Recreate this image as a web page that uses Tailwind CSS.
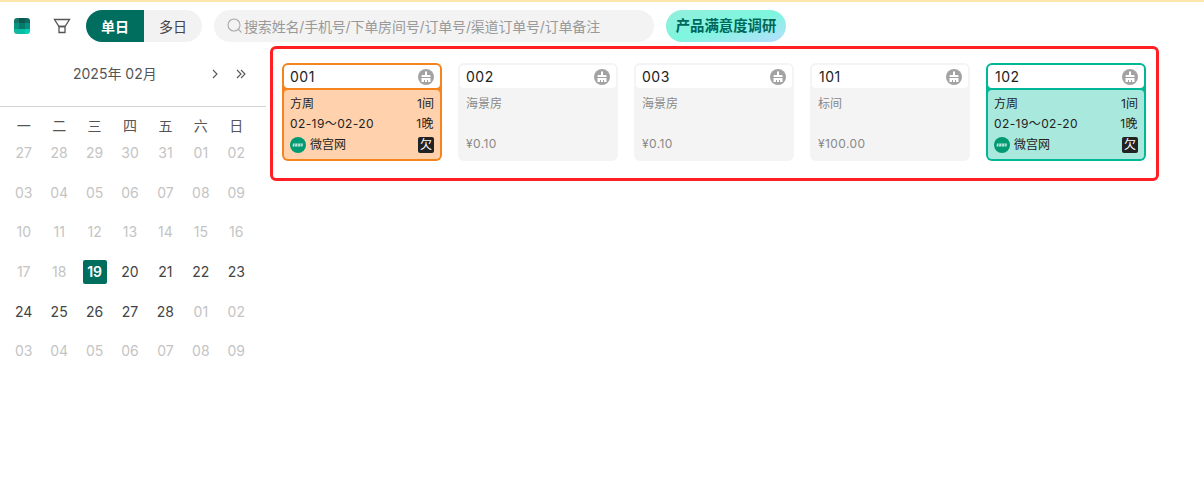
<!DOCTYPE html>
<html lang="zh">
<head>
    <meta charset="UTF-8">
    <title>房态</title>
    <script src="https://cdn.jsdelivr.net/npm/@tailwindcss/browser@4"></script>
</head>
<body class="bg-white w-[1204px] h-[504px] overflow-hidden font-['Inter','Noto_Sans_CJK_SC',sans-serif] text-[#333]">
    <div class="h-[2px] bg-[#fbe7ae]"></div>

    <!-- toolbar -->
    <div class="h-[44px] flex items-center pt-[4px]">
        <div class="ml-[14px] w-[16px] h-[16px] rounded-[3px] overflow-hidden grid grid-cols-3 grid-rows-3">
            <div class="bg-[#17756a]"></div><div class="bg-[#0a5a52]"></div><div class="bg-[#0d6a60]"></div>
            <div class="bg-[#0c9280]"></div><div class="bg-[#067a6b]"></div><div class="bg-[#07907f]"></div>
            <div class="bg-[#14b7a2]"></div><div class="bg-[#03bda5]"></div><div class="bg-[#03cfb6]"></div>
        </div>
        <svg class="ml-[23px]" width="18" height="18" viewBox="0 0 18 18" fill="none" stroke="#555" stroke-width="1.3">
            <path d="M1.5 2.5h15l-4.5 7h-6z"/>
            <path d="M6 9.5h6v6h-6z"/>
        </svg>
        <div class="ml-[15px] flex w-[116px] h-[32px] rounded-full overflow-hidden text-[14px]">
            <div class="w-[58px] bg-[#006e5f] text-white font-bold flex items-center justify-center">单日</div>
            <div class="w-[58px] bg-[#f2f2f2] text-[#444] flex items-center justify-center">多日</div>
        </div>
        <div class="ml-[12px] w-[440px] h-[32px] rounded-full bg-[#f3f3f3] flex items-center pl-[13px] text-[14px] tracking-[-0.18px] text-[#999]">
            <svg width="16" height="16" viewBox="0 0 16 16" fill="none" stroke="#aaa" stroke-width="1.1">
                <circle cx="7" cy="7" r="6"/>
                <path d="M11.5 11.5l3 3"/>
            </svg>
            <span class="ml-[1px]">搜索姓名/手机号/下单房间号/订单号/渠道订单号/订单备注</span>
        </div>
        <div class="ml-[12px] w-[120px] h-[32px] rounded-full bg-gradient-to-br from-[#93eedd] via-[#7df6de] to-[#b5dcff] text-[#00675c] text-[14.4px] font-bold flex items-center justify-center">产品满意度调研</div>
    </div>

    <div class="flex">
        <!-- calendar -->
        <div class="w-[266px] shrink-0">
            <div class="h-[61px] border-b border-[#d4d4d4] flex items-start text-[14px] text-[#555]">
                <div class="ml-[73px] mt-[17px]">2025年 02月</div>
                <svg class="ml-[54px] mt-[23px]" width="8" height="10" viewBox="0 0 8 10" fill="none" stroke="#555" stroke-width="1.1"><path d="M2 1l4 4-4 4"/></svg>
                <svg class="ml-[17px] mt-[23px]" width="10" height="10" viewBox="0 0 10 10" fill="none" stroke="#555" stroke-width="1.1"><path d="M1 1l4 4-4 4M5 1l4 4-4 4"/></svg>
            </div>
            <div class="ml-[6px] w-[248px] grid grid-cols-7 text-center text-[14px] leading-[20px]">
                <div class="h-[29px] flex items-end justify-center text-[#555]">一</div>
                <div class="h-[29px] flex items-end justify-center text-[#555]">二</div>
                <div class="h-[29px] flex items-end justify-center text-[#555]">三</div>
                <div class="h-[29px] flex items-end justify-center text-[#555]">四</div>
                <div class="h-[29px] flex items-end justify-center text-[#555]">五</div>
                <div class="h-[29px] flex items-end justify-center text-[#555]">六</div>
                <div class="h-[29px] flex items-end justify-center text-[#555]">日</div>
            </div>
            <div id="days" class="ml-[6px] -mt-[3px] w-[248px] grid grid-cols-7 auto-rows-[39.6px] text-center text-[14px]">
                <div class="flex items-center justify-center text-[#c4c4c4]">27</div><div class="flex items-center justify-center text-[#c4c4c4]">28</div><div class="flex items-center justify-center text-[#c4c4c4]">29</div><div class="flex items-center justify-center text-[#c4c4c4]">30</div><div class="flex items-center justify-center text-[#c4c4c4]">31</div><div class="flex items-center justify-center text-[#c4c4c4]">01</div><div class="flex items-center justify-center text-[#c4c4c4]">02</div>
                <div class="flex items-center justify-center text-[#c4c4c4]">03</div><div class="flex items-center justify-center text-[#c4c4c4]">04</div><div class="flex items-center justify-center text-[#c4c4c4]">05</div><div class="flex items-center justify-center text-[#c4c4c4]">06</div><div class="flex items-center justify-center text-[#c4c4c4]">07</div><div class="flex items-center justify-center text-[#c4c4c4]">08</div><div class="flex items-center justify-center text-[#c4c4c4]">09</div>
                <div class="flex items-center justify-center text-[#c4c4c4]">10</div><div class="flex items-center justify-center text-[#c4c4c4]">11</div><div class="flex items-center justify-center text-[#c4c4c4]">12</div><div class="flex items-center justify-center text-[#c4c4c4]">13</div><div class="flex items-center justify-center text-[#c4c4c4]">14</div><div class="flex items-center justify-center text-[#c4c4c4]">15</div><div class="flex items-center justify-center text-[#c4c4c4]">16</div>
                <div class="flex items-center justify-center text-[#c4c4c4]">17</div><div class="flex items-center justify-center text-[#c4c4c4]">18</div>
                <div class="flex items-center justify-center"><span class="w-[24px] h-[24px] rounded-[2px] bg-[#006e5f] text-white font-semibold flex items-center justify-center">19</span></div>
                <div class="flex items-center justify-center text-[#444]">20</div><div class="flex items-center justify-center text-[#444]">21</div><div class="flex items-center justify-center text-[#444]">22</div><div class="flex items-center justify-center text-[#444]">23</div>
                <div class="flex items-center justify-center text-[#444]">24</div><div class="flex items-center justify-center text-[#444]">25</div><div class="flex items-center justify-center text-[#444]">26</div><div class="flex items-center justify-center text-[#444]">27</div><div class="flex items-center justify-center text-[#444]">28</div><div class="flex items-center justify-center text-[#c4c4c4]">01</div><div class="flex items-center justify-center text-[#c4c4c4]">02</div>
                <div class="flex items-center justify-center text-[#c4c4c4]">03</div><div class="flex items-center justify-center text-[#c4c4c4]">04</div><div class="flex items-center justify-center text-[#c4c4c4]">05</div><div class="flex items-center justify-center text-[#c4c4c4]">06</div><div class="flex items-center justify-center text-[#c4c4c4]">07</div><div class="flex items-center justify-center text-[#c4c4c4]">08</div><div class="flex items-center justify-center text-[#c4c4c4]">09</div>
            </div>
        </div>

        <!-- rooms -->
        <div class="ml-[4px] w-[889px] h-[135px] border-[3px] border-[#ff1f25] rounded-[6px] pt-[14px] pl-[9px] flex gap-[16px]">
            <!-- occupied 001 -->
            <div class="w-[160px] h-[98px] rounded-[6px] bg-[#f5841f] p-[2px] flex flex-col gap-[2px]">
                <div class="h-[23px] rounded-[4px] bg-white flex items-center justify-between pl-[6px] pr-[6px] text-[14px] text-[#222] tracking-[0.5px]">
                    <span>001</span>
                    <svg width="16" height="16" viewBox="0 0 16 16"><circle cx="8" cy="8" r="8" fill="#a3a3a3"/><path d="M7 2.5h2v3.500h2.500a1 1 0 0 1 1 1v1h-9V7a1 1 0 0 1 1-1H7zM3.500 9h9v4h-2.500v-2h-1v2h-2v-2h-1v2h-2.500z" fill="#fff"/></svg>
                </div>
                <div class="flex-1 rounded-[4px] bg-[#ffd2ad] px-[6px] text-[12px] text-[#222] flex flex-col">
                    <div class="h-[20px] mt-[4px] flex items-center justify-between"><span>方周</span><span>1间</span></div>
                    <div class="h-[20px] flex items-center justify-between tracking-[0.4px]"><span>02-19～02-20</span><span>1晚</span></div>
                    <div class="h-[22px] flex items-center justify-between">
                        <span class="flex items-center gap-[4px]"><svg width="16" height="16" viewBox="0 0 16 16"><circle cx="8" cy="8" r="8" fill="#009a72"/><path d="M3 6.500h10l-.5 3h-10z" fill="#fff" fill-opacity=".75"/><path d="M5 6.500l-.5 3M8 6.500l-.5 3M11 6.500l-.5 3" stroke="#009a72" stroke-width=".7"/></svg>微宫网</span>
                        <span class="w-[16px] h-[16px] rounded-[2px] bg-[#222] text-white flex items-center justify-center">欠</span>
                    </div>
                </div>
            </div>
            <!-- vacant 002 -->
            <div class="w-[160px] h-[98px] rounded-[6px] bg-[#f4f4f4] p-[2px] flex flex-col gap-[2px]">
                <div class="h-[23px] rounded-[4px] bg-white flex items-center justify-between pl-[6px] pr-[6px] text-[14px] text-[#222] tracking-[0.5px]">
                    <span>002</span>
                    <svg width="16" height="16" viewBox="0 0 16 16"><circle cx="8" cy="8" r="8" fill="#a3a3a3"/><path d="M7 2.5h2v3.500h2.500a1 1 0 0 1 1 1v1h-9V7a1 1 0 0 1 1-1H7zM3.500 9h9v4h-2.500v-2h-1v2h-2v-2h-1v2h-2.500z" fill="#fff"/></svg>
                </div>
                <div class="flex-1 px-[6px] text-[12px] text-[#888] flex flex-col">
                    <div class="mt-[4px] h-[20px] flex items-center">海景房</div>
                    <div class="mt-[20px] h-[20px] flex items-center tracking-[0.4px]">¥0.10</div>
                </div>
            </div>
            <!-- vacant 003 -->
            <div class="w-[160px] h-[98px] rounded-[6px] bg-[#f4f4f4] p-[2px] flex flex-col gap-[2px]">
                <div class="h-[23px] rounded-[4px] bg-white flex items-center justify-between pl-[6px] pr-[6px] text-[14px] text-[#222] tracking-[0.5px]">
                    <span>003</span>
                    <svg width="16" height="16" viewBox="0 0 16 16"><circle cx="8" cy="8" r="8" fill="#a3a3a3"/><path d="M7 2.5h2v3.500h2.500a1 1 0 0 1 1 1v1h-9V7a1 1 0 0 1 1-1H7zM3.500 9h9v4h-2.500v-2h-1v2h-2v-2h-1v2h-2.500z" fill="#fff"/></svg>
                </div>
                <div class="flex-1 px-[6px] text-[12px] text-[#888] flex flex-col">
                    <div class="mt-[4px] h-[20px] flex items-center">海景房</div>
                    <div class="mt-[20px] h-[20px] flex items-center tracking-[0.4px]">¥0.10</div>
                </div>
            </div>
            <!-- vacant 101 -->
            <div class="w-[160px] h-[98px] rounded-[6px] bg-[#f4f4f4] p-[2px] flex flex-col gap-[2px]">
                <div class="h-[23px] rounded-[4px] bg-white flex items-center justify-between pl-[7px] pr-[6px] text-[14px] text-[#222] tracking-[0.5px]">
                    <span>101</span>
                    <svg width="16" height="16" viewBox="0 0 16 16"><circle cx="8" cy="8" r="8" fill="#a3a3a3"/><path d="M7 2.5h2v3.500h2.500a1 1 0 0 1 1 1v1h-9V7a1 1 0 0 1 1-1H7zM3.500 9h9v4h-2.500v-2h-1v2h-2v-2h-1v2h-2.500z" fill="#fff"/></svg>
                </div>
                <div class="flex-1 px-[6px] text-[12px] text-[#888] flex flex-col">
                    <div class="mt-[4px] h-[20px] flex items-center">标间</div>
                    <div class="mt-[20px] h-[20px] flex items-center tracking-[0.4px]">¥100.00</div>
                </div>
            </div>
            <!-- occupied 102 -->
            <div class="w-[160px] h-[98px] rounded-[6px] bg-[#00b797] p-[2px] flex flex-col gap-[2px]">
                <div class="h-[23px] rounded-[4px] bg-white flex items-center justify-between pl-[7px] pr-[6px] text-[14px] text-[#222] tracking-[0.5px]">
                    <span>102</span>
                    <svg width="16" height="16" viewBox="0 0 16 16"><circle cx="8" cy="8" r="8" fill="#a3a3a3"/><path d="M7 2.5h2v3.500h2.500a1 1 0 0 1 1 1v1h-9V7a1 1 0 0 1 1-1H7zM3.500 9h9v4h-2.500v-2h-1v2h-2v-2h-1v2h-2.500z" fill="#fff"/></svg>
                </div>
                <div class="flex-1 rounded-[4px] bg-[#a9e8dc] px-[6px] text-[12px] text-[#222] flex flex-col">
                    <div class="h-[20px] mt-[4px] flex items-center justify-between"><span>方周</span><span>1间</span></div>
                    <div class="h-[20px] flex items-center justify-between tracking-[0.4px]"><span>02-19～02-20</span><span>1晚</span></div>
                    <div class="h-[22px] flex items-center justify-between">
                        <span class="flex items-center gap-[4px]"><svg width="16" height="16" viewBox="0 0 16 16"><circle cx="8" cy="8" r="8" fill="#009a72"/><path d="M3 6.500h10l-.5 3h-10z" fill="#fff" fill-opacity=".75"/><path d="M5 6.500l-.5 3M8 6.500l-.5 3M11 6.500l-.5 3" stroke="#009a72" stroke-width=".7"/></svg>微宫网</span>
                        <span class="w-[16px] h-[16px] rounded-[2px] bg-[#222] text-white flex items-center justify-center">欠</span>
                    </div>
                </div>
            </div>
        </div>
    </div>
</body>
</html>
